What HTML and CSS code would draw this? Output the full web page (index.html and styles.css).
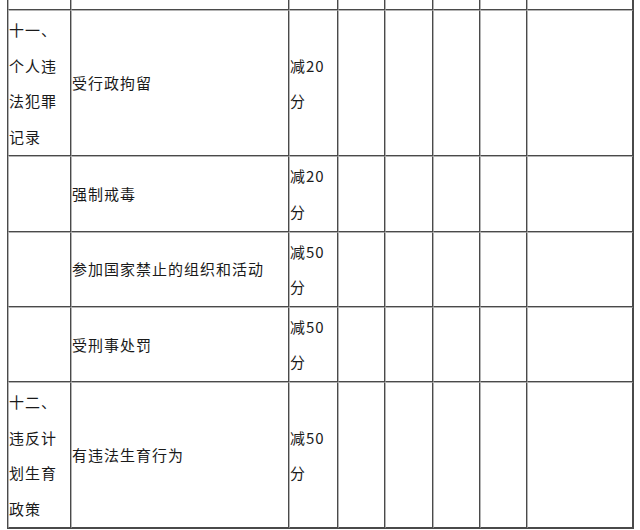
FILE: index.html
```html
<!DOCTYPE html>
<html lang="zh">
<head>
<meta charset="utf-8">
<link rel="stylesheet" href="styles.css">
</head>
<body>
<table class="sheet">
  <tr class="prev">
    <td class="c1"></td><td class="c2"></td><td class="c3"></td><td class="c4"></td>
    <td class="c5"></td><td class="c6"></td><td class="c7"></td><td class="c8"></td>
  </tr>
  <tr>
    <td>十一、个人违法犯罪记录</td>
    <td>受行政拘留</td>
    <td>减20分</td>
    <td></td><td></td><td></td><td></td><td></td>
  </tr>
  <tr>
    <td></td>
    <td>强制戒毒</td>
    <td>减20分</td>
    <td></td><td></td><td></td><td></td><td></td>
  </tr>
  <tr>
    <td></td>
    <td>参加国家禁止的组织和活动</td>
    <td>减50分</td>
    <td></td><td></td><td></td><td></td><td></td>
  </tr>
  <tr>
    <td></td>
    <td>受刑事处罚</td>
    <td>减50分</td>
    <td></td><td></td><td></td><td></td><td></td>
  </tr>
  <tr>
    <td>十二、违反计划生育政策</td>
    <td>有违法生育行为</td>
    <td>减50分</td>
    <td></td><td></td><td></td><td></td><td></td>
  </tr>
</table>
</body>
</html>
```

FILE: styles.css
```css
html, body {
  margin: 0;
  padding: 0;
  background: #ffffff;
  overflow: hidden;
}

body {
  font-family: "Noto Sans CJK SC", "Liberation Sans", sans-serif;
  font-size: 15px;
  letter-spacing: 1px;
  color: #1a1a1a;
}

.sheet {
  margin: -35px 0 0 7px;
  table-layout: fixed;
  width: 627px;
  border-collapse: separate;
  border-spacing: 0;
  border: 1px solid #4a4a4a;
}

.sheet td {
  box-sizing: border-box;
  padding: 1px 1px 1px 0;
  line-height: 35.6px;
  vertical-align: middle;
  text-align: left;
  border: 1px solid;
  border-color: #b4b4b4 #4a4a4a #4a4a4a #b4b4b4;
}

.sheet .prev td {
  height: 44px;
}

.c1 { width: 63px; }
.c2 { width: 218px; }
.c3 { width: 49px; }
.c4 { width: 47px; }
.c5 { width: 48px; }
.c6 { width: 47px; }
.c7 { width: 47px; }
.c8 { width: 106px; }
```
